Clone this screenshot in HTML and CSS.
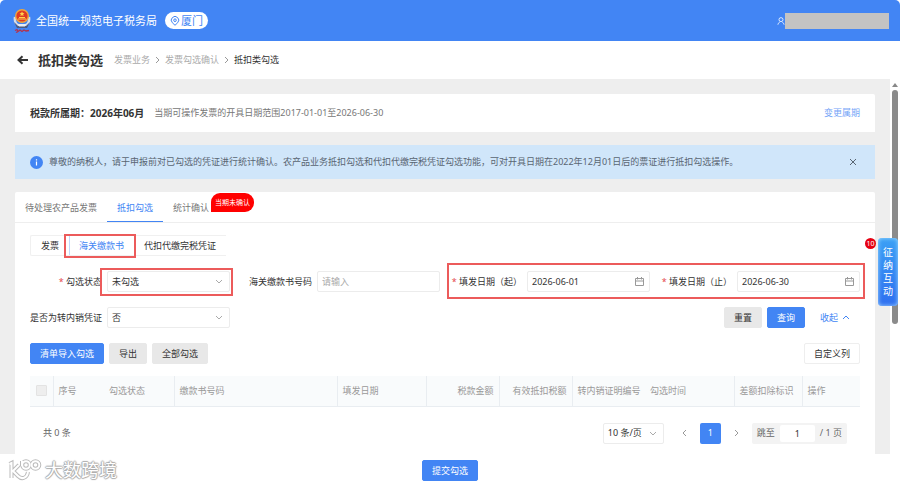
FILE: index.html
```html
<!DOCTYPE html>
<html lang="zh-CN">
<head>
  <meta charset="UTF-8">
  <meta name="viewport" content="width=device-width, initial-scale=1.0">
  <title>抵扣类勾选</title>
  <link rel="stylesheet" href="styles.css">
</head>
<body>

  <header class="topbar">
    <svg class="emblem" viewBox="0 0 18 26" aria-hidden="true">
      <path d="M2 9C1 15 4 18 9 18S17 15 16 9" fill="none" stroke="#d5dbe8" stroke-width="2.4"/>
      <path d="M1 14l4 4h8l4-4-3 6H4z" fill="#4a5a83"/>
      <circle cx="9" cy="8" r="7" fill="#f0a63c"/>
      <circle cx="9" cy="8" r="5.6" fill="#e03a24"/>
      <path d="M9 3.4l.8 1.6 1.7.2-1.3 1.1.4 1.7L9 7.200l-1.600.8.4-1.700-1.300-1.100 1.700-.2z" fill="#ffd34d"/>
      <path d="M5 11h8M6 9.500h6" stroke="#ffd34d" stroke-width="1"/>
      <path d="M5 16h8l-1 2.500H6z" fill="#e9edf5"/>
      <path d="M2 22.500l2-1 1 2 2-1.500 2 1.500 2-1.500 2 1 3-.5M3 24.500l2-1" fill="none" stroke="#b5324a" stroke-width="1.300"/>
    </svg>
    <span class="site-name">全国统一规范电子税务局</span>
    <a class="region" href="#">
      <svg viewBox="0 0 10 10" aria-hidden="true"><path d="M5 9.300L2.300 6.700a3.700 3.700 0 1 1 5.400 0z"/><circle cx="5" cy="4.200" r="1.300"/></svg>
      厦门
    </a>
    <div class="user">
      <svg viewBox="0 0 10 10" aria-hidden="true"><circle cx="5" cy="3.300" r="2.500"/><path d="M1.200 9.600V8.400L3.400 6.500M8.800 9.600V8.400L6.600 6.500"/></svg>
      <span class="user-name"></span>
    </div>
  </header>

  <nav class="crumbs">
    <a class="back" href="#" aria-label="返回">
      <svg viewBox="0 0 12 10" aria-hidden="true"><path d="M11 5H2M5.500 1.300L1.500 5l4 3.700"/></svg>
    </a>
    <h1>抵扣类勾选</h1>
    <a href="#">发票业务</a>
    <svg class="sep" viewBox="0 0 5 8" aria-hidden="true"><path d="M1 1l3 3-3 3"/></svg>
    <a href="#">发票勾选确认</a>
    <svg class="sep" viewBox="0 0 5 8" aria-hidden="true"><path d="M1 1l3 3-3 3"/></svg>
    <span class="current">抵扣类勾选</span>
  </nav>

  <div class="scroll-area">
    <main>
      <section class="period card">
        <h2>税款所属期：2026年06月</h2>
        <span class="range">当期可操作发票的开具日期范围2017-01-01至2026-06-30</span>
        <a href="#">变更属期</a>
      </section>

      <section class="notice">
        <svg class="info" viewBox="0 0 13 13" aria-hidden="true"><circle cx="6.500" cy="6.500" r="6.500" fill="#4285f4"/><path d="M6.500 5.600v4M6.500 3.200v1.300" stroke="#fff" stroke-width="1.200"/></svg>
        <p>尊敬的纳税人，请于申报前对已勾选的凭证进行统计确认。农产品业务抵扣勾选和代扣代缴完税凭证勾选功能，可对开具日期在2022年12月01日后的票证进行抵扣勾选操作。</p>
        <button class="close" type="button" aria-label="关闭">
          <svg viewBox="0 0 8 8" aria-hidden="true"><path d="M1 1l6 6M7 1L1 7"/></svg>
        </button>
      </section>

      <section class="panel card">
        <div class="tabs">
          <a href="#">待处理农产品发票</a>
          <a class="active" href="#">抵扣勾选</a>
          <a href="#">统计确认<span class="tag">当期未确认</span></a>
        </div>

        <div class="panel-body">
          <div class="segments">
            <button type="button">发票</button>
            <button class="active" type="button">海关缴款书<span class="mark"></span></button>
            <button type="button">代扣代缴完税凭证</button>
          </div>

          <form class="filters">
            <div class="field">
              <label class="required" for="status">勾选状态</label>
              <div class="control">
                <select id="status"><option>未勾选</option></select>
                <svg class="chevron" viewBox="0 0 8 5" aria-hidden="true"><path d="M1 1l3 3 3-3"/></svg>
                <span class="mark"></span>
              </div>
            </div>
            <div class="field">
              <label for="number">海关缴款书号码</label>
              <div class="control"><input type="text" id="number" placeholder="请输入"></div>
            </div>
            <div class="dates">
              <div class="field">
                <label class="required" for="from">填发日期（起）</label>
                <div class="control">
                  <input type="text" id="from" value="2026-06-01">
                  <svg class="calendar" viewBox="0 0 9 9" aria-hidden="true"><path d="M.5 1.500h8v7h-8zM.5 4h8M2.500 0v2.500M6.500 0v2.500"/></svg>
                </div>
              </div>
              <div class="field">
                <label class="required" for="to">填发日期（止）</label>
                <div class="control">
                  <input type="text" id="to" value="2026-06-30">
                  <svg class="calendar" viewBox="0 0 9 9" aria-hidden="true"><path d="M.5 1.500h8v7h-8zM.5 4h8M2.500 0v2.500M6.500 0v2.500"/></svg>
                </div>
              </div>
              <span class="mark"></span>
            </div>
            <div class="field">
              <label for="resale">是否为转内销凭证</label>
              <div class="control">
                <select id="resale"><option>否</option></select>
                <svg class="chevron" viewBox="0 0 8 5" aria-hidden="true"><path d="M1 1l3 3 3-3"/></svg>
              </div>
            </div>
            <div class="actions">
              <button class="btn" type="reset">重置</button>
              <button class="btn primary" type="button">查询</button>
              <a class="collapse" href="#">收起
                <svg viewBox="0 0 8 5" aria-hidden="true"><path d="M1 4l3-3 3 3"/></svg>
              </a>
            </div>
          </form>

          <div class="toolbar">
            <button class="btn primary" type="button">清单导入勾选</button>
            <button class="btn" type="button">导出</button>
            <button class="btn" type="button">全部勾选</button>
            <button class="btn plain" type="button">自定义列</button>
          </div>

          <table>
            <colgroup>
              <col class="w-check"><col class="w-index"><col class="w-status"><col class="w-number">
              <col class="w-date"><col class="w-amount"><col class="w-amount"><col class="w-amount">
              <col class="w-date"><col class="w-diff"><col class="w-action">
            </colgroup>
            <thead>
              <tr>
                <th class="line check"><input type="checkbox" aria-label="全选" disabled></th>
                <th>序号</th>
                <th class="line">勾选状态</th>
                <th class="line">缴款书号码</th>
                <th class="line">填发日期</th>
                <th class="line right">税款金额</th>
                <th class="line right">有效抵扣税额</th>
                <th>转内销证明编号</th>
                <th class="line">勾选时间</th>
                <th class="line">差额扣除标识</th>
                <th>操作</th>
              </tr>
            </thead>
          </table>

          <div class="pager">
            <span class="total">共 0 条</span>
            <div class="control page-size">
              <select aria-label="每页条数"><option>10 条/页</option></select>
              <svg class="chevron" viewBox="0 0 8 5" aria-hidden="true"><path d="M1 1l3 3 3-3"/></svg>
            </div>
            <button class="arrow" type="button" aria-label="上一页"><svg viewBox="0 0 5 8" aria-hidden="true"><path d="M4 1L1 4l3 3"/></svg></button>
            <button class="page" type="button">1</button>
            <button class="arrow" type="button" aria-label="下一页"><svg viewBox="0 0 5 8" aria-hidden="true"><path d="M1 1l3 3-3 3"/></svg></button>
            <div class="jump">
              <label for="jump">跳至</label>
              <input type="text" id="jump" value="1">
              <span>/ 1 页</span>
            </div>
          </div>
        </div>
      </section>
    </main>

    <div class="scrollbar"><span class="up"></span><span class="thumb"></span></div>

    <button class="helper" type="button">征纳互动<span class="count">10</span></button>
  </div>

  <footer>
    <button class="btn primary" type="button">提交勾选</button>
    <div class="watermark">
      <svg viewBox="0 0 34 22" aria-hidden="true">
        <g class="edge">
          <path d="M1.500 5l2-1v15M11 6l-6 6 5 5c4 4 9 2 10-4"/>
          <path d="M14 2v5"/><circle cx="18" cy="6" r="3.800"/><circle cx="27.500" cy="6" r="3.800"/>
        </g>
        <g class="fill">
          <path d="M1.500 5l2-1v15M11 6l-6 6 5 5c4 4 9 2 10-4"/>
          <path d="M14 2v5"/><circle cx="18" cy="6" r="3.800"/><circle cx="27.500" cy="6" r="3.800"/>
        </g>
      </svg>
      <span>大数跨境</span>
    </div>
  </footer>

</body>
</html>
```
FILE: styles.css
```css
* {
  box-sizing: border-box;
}

body {
  display: flex;
  flex-direction: column;
  min-height: 100vh;
  margin: 0;
  background-color: #fff;
  color: #333;
  font-family: "Noto Sans", "Noto Sans CJK SC", sans-serif;
  font-size: 9px;
  line-height: 14px;
}

a {
  color: #4285f4;
  text-decoration: none;
}

button, input, select {
  margin: 0;
  font: inherit;
  color: inherit;
}

h1, h2, p {
  margin: 0;
}

svg {
  display: block;
  flex: none;
  fill: none;
  stroke: currentColor;
}

/* header */
.topbar {
  display: flex;
  align-items: center;
  height: 41px;
  padding: 0 11px 0 13px;
  border-radius: 5px 5px 0 0;
  background-color: #4285f4;
  color: #fff;
}

.emblem {
  width: 18px;
  height: 26px;
  margin-right: 5px;
  stroke: none;
}

.site-name {
  font-size: 11px;
}

.region {
  display: flex;
  align-items: center;
  gap: 1px;
  height: 17px;
  margin-left: 8px;
  padding: 0 5px;
  border-radius: 9px;
  background-color: #fff;
  font-size: 11px;
}

.region svg {
  width: 10px;
  height: 10px;
}

.user {
  display: flex;
  align-items: center;
  margin-left: auto;
}

.user svg {
  width: 8px;
  height: 10px;
}

.user-name {
  width: 104px;
  height: 16px;
  background-color: #c3c3c3;
}

/* breadcrumb */
.crumbs {
  display: flex;
  align-items: center;
  gap: 5px;
  height: 38px;
  padding: 0 17px;
}

.crumbs a {
  color: #aaa;
}

.crumbs .back {
  margin-right: 4px;
  color: #333;
}

.back svg {
  width: 12px;
  height: 10px;
  stroke-width: 2;
}

.crumbs h1 {
  margin-right: 6px;
  font-size: 13px;
  line-height: 18px;
}

.sep {
  width: 5px;
  height: 8px;
  color: #999;
}

/* content */
.scroll-area {
  position: relative;
  display: flex;
  flex: 1;
}

main {
  display: flex;
  flex: 1;
  flex-direction: column;
  gap: 13px;
  padding: 15px 15px 0;
  background-color: #eee;
}

.card {
  border-radius: 2px 2px 0 0;
  background-color: #fff;
}

.period {
  display: flex;
  align-items: center;
  gap: 10px;
  height: 38px;
  padding: 0 15px;
}

.period h2 {
  font-size: 10px;
}

.range {
  color: #777;
}

.period a {
  margin-left: auto;
  color: #74a5f7;
}

.notice {
  display: flex;
  align-items: center;
  gap: 6px;
  min-height: 34px;
  padding: 0 15px;
  background-color: #d0e6fa;
  color: #596572;
}

.info {
  width: 13px;
  height: 13px;
  stroke: none;
}

.close {
  margin-left: auto;
  padding: 3px;
  border: 0;
  background: none;
}

.close svg {
  width: 8px;
  height: 8px;
}

.panel {
  flex: 1;
}

.tabs {
  display: flex;
  height: 31px;
  border-bottom: 1px solid #eee;
}

.tabs a {
  position: relative;
  height: 30px;
  padding: 0 10px;
  color: #777;
  line-height: 32px;
}

.tabs .active {
  border-bottom: 1px solid #4285f4;
  color: #4285f4;
}

.tag {
  position: absolute;
  top: 1px;
  left: 48px;
  padding: 0 4px;
  border-radius: 9px 9px 9px 0;
  background-color: #f00;
  color: #fff;
  font-size: 7px;
  line-height: 19px;
  white-space: nowrap;
}

.panel-body {
  padding: 12px 15px 9px;
}

.segments {
  display: flex;
}

.segments button {
  position: relative;
  height: 21px;
  padding: 0 10px;
  border: 1px solid #f0f0f0;
  border-width: 1px 0;
  background-color: #fff;
}

.segments button:first-child {
  border-left-width: 1px;
  border-radius: 2px 0 0 2px;
}

.segments .active {
  z-index: 1;
  box-shadow: inset 1px 0 #c3d8fb;
  color: #4285f4;
}

/* red highlight frames */
.mark {
  position: absolute;
  inset: -3px -3px -4px -7px;
  border: 2px solid #ec5b5b;
  pointer-events: none;
}

.segments .mark {
  inset: -2px -2px -3px -5px;
}

.dates .mark {
  inset: -8px -5px -7px -3px;
}

/* filters */
.filters {
  display: grid;
  grid-template-columns: repeat(4, 1fr);
  gap: 15px 10px;
  margin-top: 15px;
}

.field {
  display: flex;
  align-items: center;
  gap: 5px;
}

.field label {
  width: 72px;
  text-align: right;
  white-space: nowrap;
}

.required::before {
  content: "* ";
  color: #e5484d;
}

.dates {
  position: relative;
  display: grid;
  grid-column: span 2;
  grid-template-columns: 1fr 1fr;
  gap: 10px;
}

.control {
  position: relative;
  flex: 1;
}

.control input, .control select {
  display: block;
  width: 100%;
  height: 21px;
  padding: 0 4px;
  border: 1px solid #ececec;
  border-radius: 2px;
  background-color: #fff;
  appearance: none;
}

.control input::placeholder {
  color: #aaa;
}

.chevron {
  position: absolute;
  top: 8px;
  right: 7px;
  width: 8px;
  height: 5px;
  color: #aaa;
  pointer-events: none;
}

.calendar {
  position: absolute;
  top: 6px;
  right: 6px;
  width: 9px;
  height: 9px;
  color: #999;
}

.actions {
  display: flex;
  grid-column: span 3;
  justify-content: flex-end;
  gap: 5px;
}

.btn {
  height: 21px;
  padding: 0 9px;
  border: 1px solid #e8e8e8;
  border-radius: 2px;
  background-color: #e8e8e8;
}

.primary {
  border-color: #4285f4;
  background-color: #4285f4;
  color: #fff;
}

.plain {
  border-color: #eee;
  background-color: #fff;
}

.collapse {
  display: flex;
  align-items: center;
  gap: 4px;
  padding: 0 10px;
}

.collapse svg {
  width: 8px;
  height: 5px;
}

.toolbar {
  display: flex;
  gap: 5px;
  margin-top: 15px;
}

.toolbar .plain {
  margin-left: auto;
}

/* table */
table {
  width: 100%;
  margin-top: 12px;
  border-collapse: collapse;
  table-layout: fixed;
}

th {
  height: 30px;
  padding: 0 5px;
  border-bottom: 1px solid #e9edf1;
  background-color: #f9fbfc;
  color: #999;
  font-weight: normal;
  text-align: left;
  white-space: nowrap;
}

th.line {
  border-right: 1px solid #e9edf1;
}

th.right {
  text-align: right;
}

th.check {
  text-align: center;
}

th input {
  display: block;
  width: 11px;
  height: 11px;
  margin: 0 auto;
  border: 1px solid #e3e3e3;
  border-radius: 1px;
  background-color: #eee;
  appearance: none;
}

.w-check { width: 23px; }
.w-index { width: 51px; }
.w-status { width: 70px; }
.w-date { width: 89px; }
.w-amount { width: 73px; }
.w-diff { width: 68px; }
.w-action { width: 58px; }

/* pagination */
.pager {
  display: flex;
  align-items: center;
  margin-top: 16px;
  padding: 0 13px;
}

.total {
  margin-right: auto;
  color: #666;
}

.page-size {
  flex: none;
  width: 61px;
  margin-right: 10px;
}

.arrow {
  display: flex;
  align-items: center;
  justify-content: center;
  width: 21px;
  height: 21px;
  margin-right: 5px;
  padding: 0;
  border: 0;
  background: none;
  color: #999;
}

.arrow svg {
  width: 5px;
  height: 8px;
}

.page {
  width: 21px;
  height: 21px;
  margin-right: 5px;
  padding: 0;
  border: 0;
  border-radius: 2px;
  background-color: #4285f4;
  color: #fff;
}

.jump {
  display: flex;
  align-items: center;
  gap: 5px;
  height: 21px;
  padding: 0 5px;
  border-radius: 2px;
  background-color: #f3f3f3;
  color: #666;
}

.jump input {
  width: 35px;
  height: 17px;
  padding: 0;
  border: 0;
  border-radius: 2px;
  background-color: #fff;
  color: #333;
  text-align: center;
}

/* scrollbar */
.scrollbar {
  display: flex;
  flex-direction: column;
  align-items: center;
  gap: 3px;
  width: 10px;
  padding-top: 4px;
}

.up {
  border: 3px solid transparent;
  border-top: 0;
  border-bottom: 4px solid #888;
}

.thumb {
  width: 6px;
  height: 63%;
  border-radius: 3px;
  background-color: #8b8b8b;
}

/* floating helper */
.helper {
  position: absolute;
  top: 159px;
  right: 2px;
  width: 20px;
  padding: 8px 5px;
  border: 0;
  border-radius: 4px;
  background: linear-gradient(#3ba0f5, #2f6ff0);
  box-shadow: inset 0 0 4px #a5dcff;
  color: #fff;
  font-size: 10px;
  line-height: 13px;
}

.count {
  position: absolute;
  top: 0;
  left: -13px;
  width: 11px;
  border-radius: 6px;
  background-color: #e60012;
  font-size: 7px;
  line-height: 11px;
}

/* footer */
footer {
  position: relative;
  display: flex;
  align-items: center;
  justify-content: center;
  height: 33px;
}

.watermark {
  position: absolute;
  bottom: 5px;
  left: 8px;
  display: flex;
  align-items: center;
  gap: 3px;
  color: #fff;
  font-size: 18px;
  line-height: 24px;
  text-shadow: 1px 0 1px #aaa, -1px 0 1px #aaa, 0 1px 1px #aaa, 0 -1px 1px #aaa;
}

.watermark svg {
  width: 34px;
  height: 22px;
}

.edge {
  stroke: #bbb;
  stroke-width: 4;
}

.fill {
  stroke: #fff;
  stroke-width: 2;
}
```
